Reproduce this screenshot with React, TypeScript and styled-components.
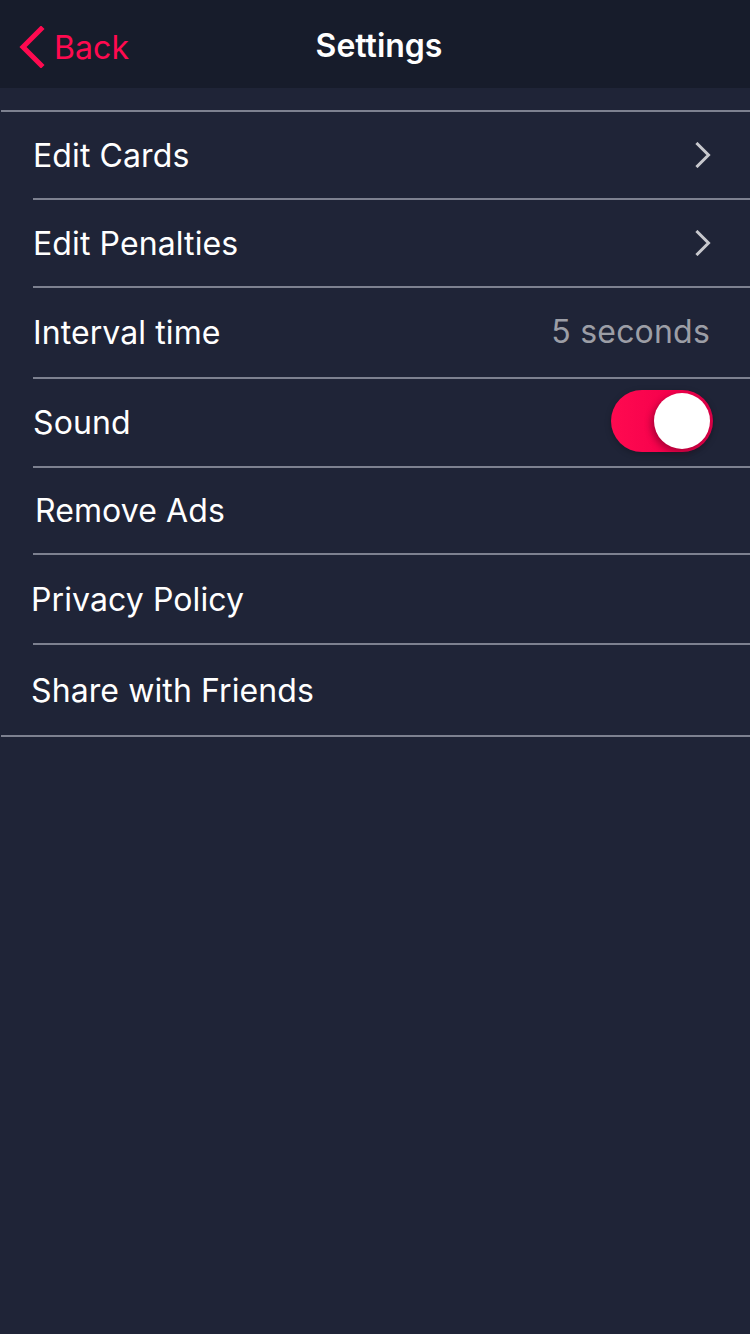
import React from "react";
import styled, { createGlobalStyle } from "styled-components";

const Global = createGlobalStyle`
  html, body { margin: 0; padding: 0; background: #1f2437; }
  body { font-family: Inter, "Noto Sans", "Liberation Sans", sans-serif; -webkit-font-smoothing: antialiased; }
  * { box-sizing: border-box; }
`;

const Page = styled.div`
  width: 750px;
  min-height: 1334px;
  background: #1f2437;
  display: flex;
  flex-direction: column;
`;

const NavBar = styled.header`
  height: 88px;
  padding-top: 6px;
  background: #171c2b;
  display: grid;
  grid-template-columns: 1fr auto 1fr;
  align-items: center;
`;

const BackButton = styled.div`
  display: flex;
  align-items: center;
  gap: 9px;
  padding-left: 17px;
  color: #ff0a50;
  font-size: 32px;
  letter-spacing: 0.1px;
`;

const Title = styled.h1`
  margin: 0;
  padding-left: 8px;
  color: #ffffff;
  font-size: 32px;
  font-weight: 600;
  letter-spacing: 0px;
  margin-top: -4px;
`;

const List = styled.div`
  margin-top: 22px;
  margin-left: 1px;
  border-top: 2px solid #7d8190;
  border-bottom: 2px solid #7d8190;
`;

const Row = styled.div<{ $h: number; $pl: number; $last?: boolean }>`
  height: ${(p) => p.$h}px;
  display: flex;
  align-items: center;
  justify-content: space-between;
  padding-left: ${(p) => p.$pl - 1}px;
  padding-right: 39px;
  position: relative;
  ${(p) =>
    p.$last
      ? ""
      : `&::after {
    content: "";
    position: absolute;
    left: 32px;
    right: 0;
    bottom: -2px;
    height: 2px;
    background: #7d8190;
  }
  margin-bottom: 2px;`}
`;

const Label = styled.span`
  color: #ffffff;
  font-size: 32px;
  letter-spacing: 0.1px;
`;

const Value = styled.span`
  color: #9c9ea6;
  font-size: 32px;
  letter-spacing: 0.2px;
  margin-right: 1px;
  margin-top: -2px;
`;

const Switch = styled.div`
  width: 102px;
  height: 62px;
  border-radius: 31px;
  background: linear-gradient(90deg, #ff0a50 0%, #f5004c 60%, #d90046 100%);
  display: flex;
  align-items: center;
  justify-content: flex-end;
  padding-right: 3px;
  margin-right: -2px;
  margin-top: -4px;
  box-shadow: 0 2px 6px rgba(0, 0, 0, 0.25);
`;

const Knob = styled.div`
  width: 56px;
  height: 56px;
  border-radius: 50%;
  background: #ffffff;
  box-shadow: -3px 3px 6px rgba(90, 0, 30, 0.45);
`;

const Chevron = () => (
  <svg width="17" height="26" viewBox="0 0 17 26" style={{ marginRight: -1 }}>
    <path d="M2.5 2 L13.5 13 L2.5 24" fill="none" stroke="#c7c8cd" strokeWidth="3" strokeLinecap="square" />
  </svg>
);

const BackChevron = () => (
  <svg width="28" height="42" viewBox="0 0 28 42">
    <path d="M24 3 L6 21 L24 39" fill="none" stroke="#ff0a50" strokeWidth="5" strokeLinecap="square" />
  </svg>
);

export default function App() {
  return (
    <Page>
      <Global />
      <NavBar>
        <BackButton>
          <BackChevron />
          <span>Back</span>
        </BackButton>
        <Title>Settings</Title>
        <div />
      </NavBar>
      <List>
        <Row $h={86} $pl={33}>
          <Label>Edit Cards</Label>
          <Chevron />
        </Row>
        <Row $h={86} $pl={33}>
          <Label>Edit Penalties</Label>
          <Chevron />
        </Row>
        <Row $h={89} $pl={33}>
          <Label>Interval time</Label>
          <Value>5 seconds</Value>
        </Row>
        <Row $h={87} $pl={33}>
          <Label>Sound</Label>
          <Switch>
            <Knob />
          </Switch>
        </Row>
        <Row $h={85} $pl={35}>
          <Label>Remove Ads</Label>
        </Row>
        <Row $h={88} $pl={31}>
          <Label>Privacy Policy</Label>
        </Row>
        <Row $h={90} $pl={31} $last>
          <Label>Share with Friends</Label>
        </Row>
      </List>
    </Page>
  );
}
